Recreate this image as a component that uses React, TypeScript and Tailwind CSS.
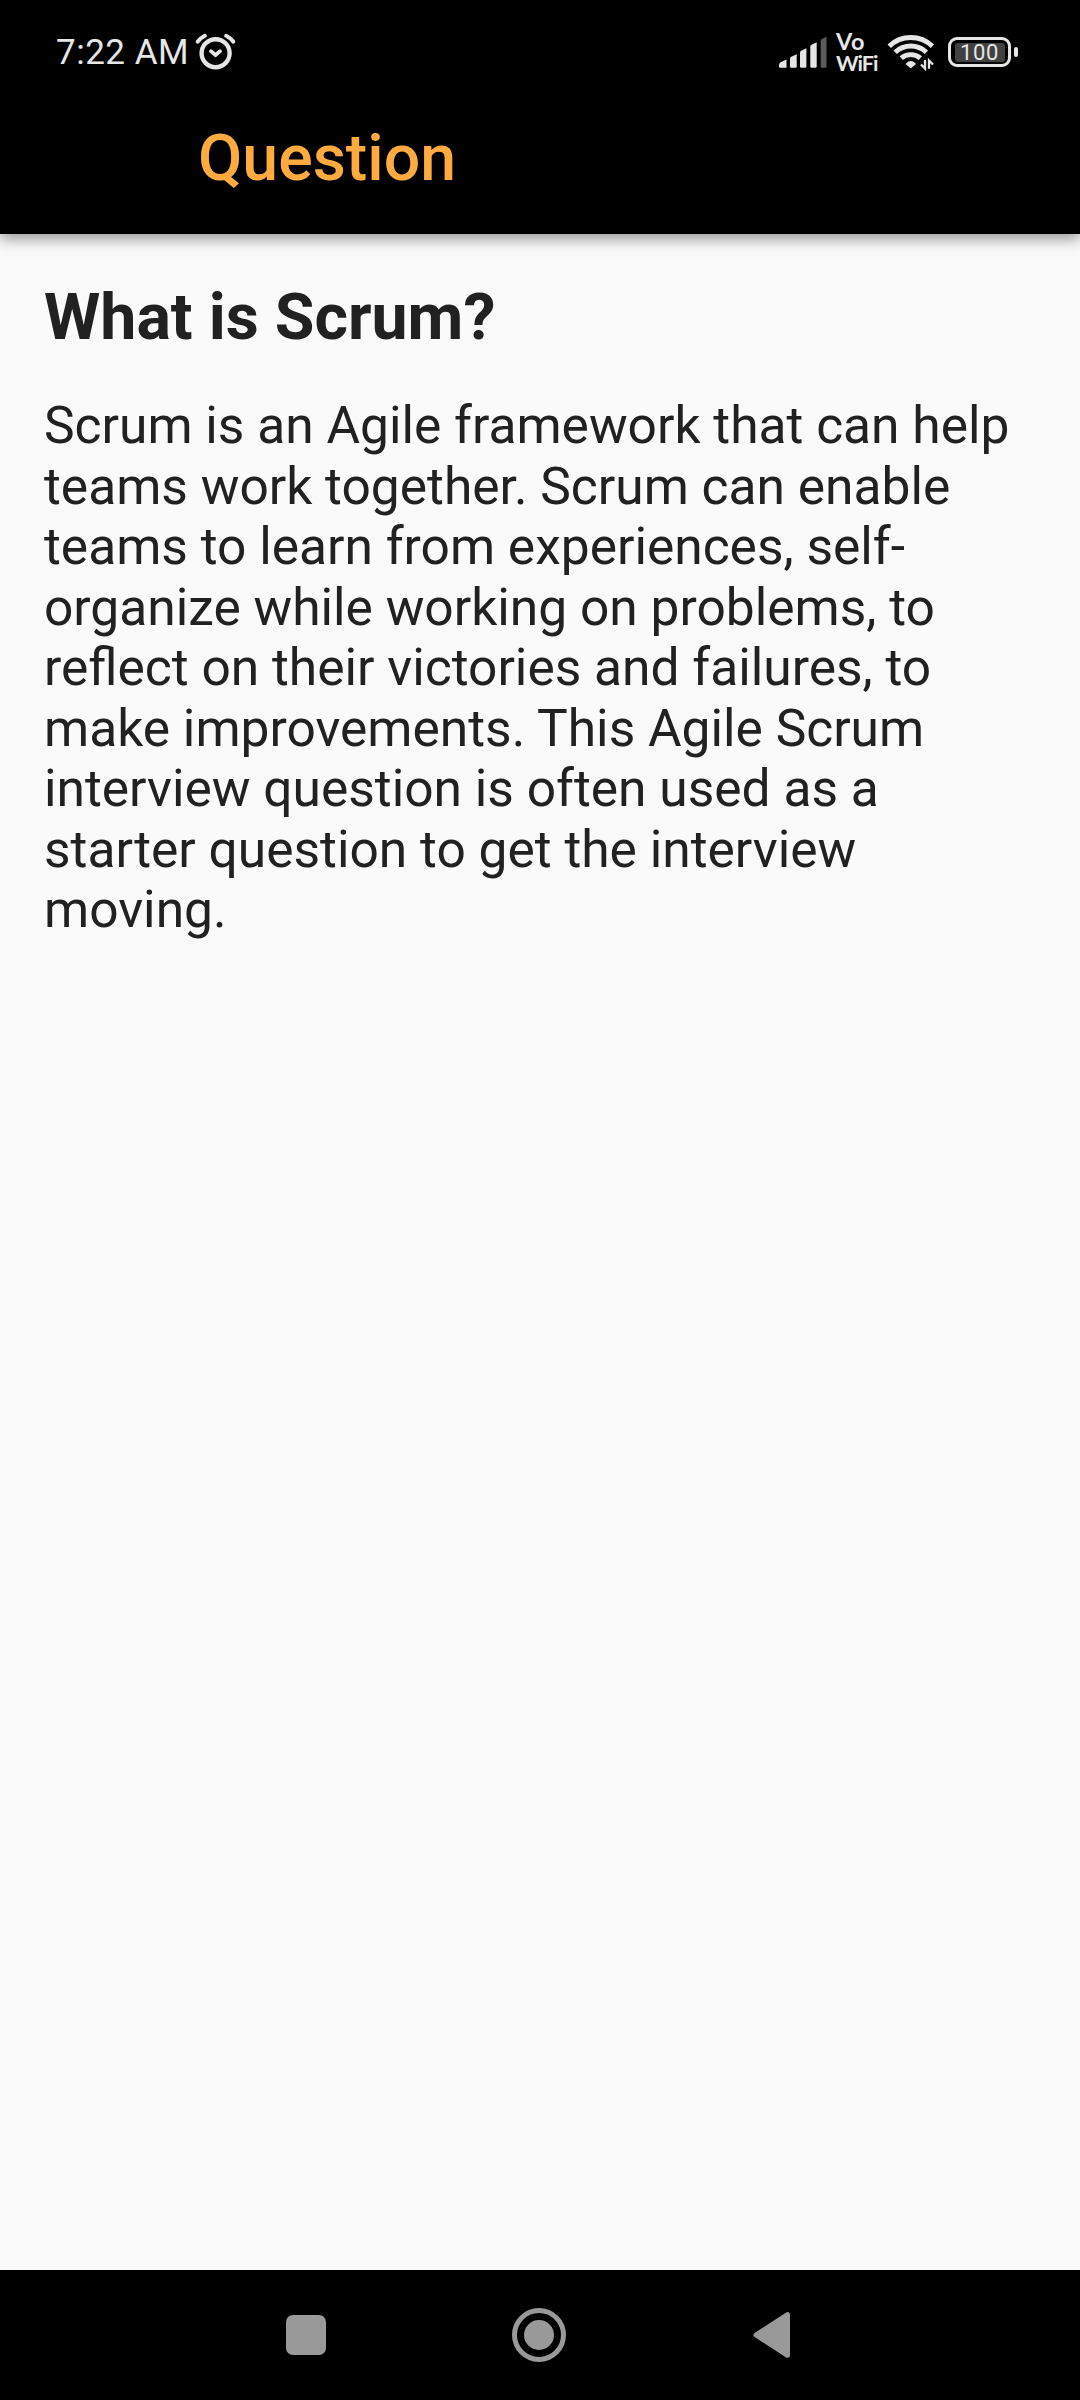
function AlarmIcon() {
  return (
    <svg className="ml-[8px] h-[42px] w-[42px]" viewBox="194 31 42 42" fill="none" stroke="#e6e6e6" strokeLinecap="round" strokeLinejoin="round">
      <circle cx="215.6" cy="53.2" r="14" strokeWidth="4.4" />
      <path d="M211 51.2l4.5 4 4.5-4" strokeWidth="3.8" />
      <path d="M197.8 41.6q3-3.8 7-5.8M233.2 41.6q-3-3.8-7-5.8" strokeWidth="4" />
    </svg>
  );
}

function SignalIcon() {
  return (
    <svg className="h-[34px] w-[50px]" viewBox="778 35 50 34" fill="#e6e6e6">
      <path d="M779 65q0-2 2-3l5.5-2.5v8.2h-6.2q-1.3 0-1.3-1.3z" />
      <path d="M790 58.5q0-1.2 1.2-1.8l5.5-2.5v12.2q0 1.3-1.3 1.3h-4.1q-1.3 0-1.3-1.3z" />
      <path d="M800 52.5q0-1.2 1.2-1.8l5.2-2.4v18.1q0 1.3-1.3 1.3h-3.8q-1.3 0-1.3-1.3z" />
      <path d="M810.3 46.5q0-1.2 1.2-1.8l5.2-2.4v24.1q0 1.3-1.3 1.3h-3.8q-1.3 0-1.3-1.3z" />
      <path fill="#5a5a5a" d="M820.7 40.8q0-1.2 1.2-1.8l4.6-2.2v29.6q0 1.3-1.3 1.3h-3.2q-1.3 0-1.3-1.3z" />
    </svg>
  );
}

/* Two-line "Vo WiFi" calling indicator */
function VoWifi() {
  return (
    <p className="ml-[8px] h-[42px] w-[44px] font-[Lato] text-[21.5px] leading-[21px] font-bold tracking-[-1px] whitespace-nowrap text-[#e6e6e6]">
      <span className="text-[23.5px] tracking-[0.5px]">Vo</span>
      <br />
      WiFi
    </p>
  );
}

function WifiIcon() {
  return (
    <svg className="ml-[7px] h-[38px] w-[48px]" viewBox="887 34 48 38" fill="none" stroke="#e6e6e6">
      <path d="M889.2 47.2a31.2 31.2 0 0 1 43.2 0" strokeWidth="4.9" />
      <path d="M895.2 53.2a22.8 22.8 0 0 1 31.2 0" strokeWidth="4.9" />
      <path d="M901.2 59.2a14.6 14.6 0 0 1 19.2 0" strokeWidth="4.9" />
      <path d="M906.6 65q4.2-4.4 8.4 0l-4.2 3.4z" fill="#e6e6e6" strokeWidth="1.6" strokeLinejoin="round" />
      <path d="M925 61v8.5l-4-4M929 69.8v-8.3l4 4" strokeWidth="2.3" />
    </svg>
  );
}

function Battery() {
  return (
    <div className="ml-[13px] flex items-center gap-[3px]">
      <div className="flex h-[30px] w-[63px] items-center justify-center rounded-[9px] border-[3.5px] border-[#e6e6e6]">
        <div className="flex h-[19px] w-[50px] items-center justify-center rounded-[3px] bg-[#414141] text-[22px] leading-[19px] tracking-[0.6px] text-[#e6e6e6]">
          100
        </div>
      </div>
      <div className="h-[10px] w-[4px] rounded-[2px] bg-[#e6e6e6]" />
    </div>
  );
}

export default function App() {
  return (
    <div className="flex h-[2400px] w-[1080px] flex-col overflow-hidden bg-[#fafafa] font-[Roboto,sans-serif]">
      <header className="relative h-[234px] shrink-0 bg-black shadow-[0_5px_14px_rgba(0,0,0,0.4)]">
        <div className="flex h-[80px] items-end justify-between pr-[62px] pl-[56px]">
          <div className="flex h-[56px] items-center text-[#e6e6e6]">
            <span className="w-[130px] pt-[2px] text-[35px] leading-[44px] tracking-[0.5px] whitespace-nowrap">7:22 AM</span>
            <AlarmIcon />
          </div>
          <div className="flex h-[56px] items-center">
            <SignalIcon />
            <VoWifi />
            <WifiIcon />
            <Battery />
          </div>
        </div>
        <h1 className="mt-[40px] ml-[198px] text-[64.4px] leading-[76px] font-medium whitespace-nowrap text-[#ffab40]">
          Question
        </h1>
      </header>
      <main className="flex-1 px-[44px] pt-[45px] text-[#212121]">
        <h2 className="text-[64.4px] leading-[76px] font-bold whitespace-nowrap">What is Scrum?</h2>
        <p className="mt-[41px] text-[51.5px] leading-[60.5px] whitespace-nowrap">
          Scrum is an Agile framework that can help<br />
          teams work together. Scrum can enable<br />
          teams to learn from experiences, self-<br />
          organize while working on problems, to<br />
          reflect on their victories and failures, to<br />
          make improvements. This Agile Scrum<br />
          interview question is often used as a<br />
          starter question to get the interview<br />
          moving.
        </p>
      </main>
      <nav className="flex h-[130px] shrink-0 items-center bg-black pl-[286px]">
        <div className="h-[40px] w-[40px] rounded-[7px] bg-[#999999]" />
        <div className="ml-[186px] flex h-[54px] w-[54px] items-center justify-center rounded-full border-[5px] border-[#999999]">
          <div className="h-[30px] w-[30px] rounded-full bg-[#999999]" />
        </div>
        <svg className="ml-[187px] h-[48px] w-[38px]" viewBox="753 2311 38 48" fill="#999999" stroke="#999999" strokeWidth="5" strokeLinejoin="round">
          <path d="M756 2335l31.5-20.3v40.6z" />
        </svg>
      </nav>
    </div>
  );
}
